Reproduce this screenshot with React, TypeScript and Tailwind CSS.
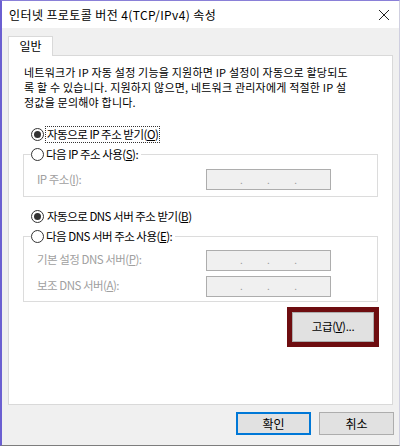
import React from "react";

function Radio({ checked }: { checked?: boolean }) {
  return (
    <span className="relative inline-flex w-[13px] h-[13px] rounded-full border border-[#333] bg-white items-center justify-center shrink-0">
      {checked && <span className="w-[7px] h-[7px] rounded-full bg-[#333]" />}
    </span>
  );
}

function IpBox() {
  return (
    <div className="w-[125px] h-[21px] border border-[#adadad] bg-[#f0f0f0] flex items-center justify-between px-[33px] text-[#9a9a9a] text-[10px] leading-none">
      <span>.</span>
      <span>.</span>
      <span>.</span>
    </div>
  );
}

export default function App() {
  return (
    <div
      className="w-[400px] h-[446px] bg-[#f0f0f0] border-l-2 border-t border-r border-b border-l-[#6b5fd1] border-t-[#8a80d8] border-r-[#cfcfe0] border-b-[#7d7d7d] flex flex-col text-[12px] text-black"
      style={{ fontFamily: '"Noto Sans CJK KR", "Noto Sans", sans-serif' }}
    >
      {/* title bar */}
      <div className="h-[27px] bg-white flex items-center justify-between pl-[7px] pr-[7px] shrink-0">
        <span className="text-[12px] tracking-[0.4px]">인터넷 프로토콜 버전 4(TCP/IPv4) 속성</span>
        <svg width="12" height="12" viewBox="0 0 12 12" className="mr-[2px]">
          <path d="M1 1 L11 11 M11 1 L1 11" stroke="#222" strokeWidth="1" />
        </svg>
      </div>

      {/* body */}
      <div className="flex-1 flex flex-col px-[6px] pt-[7px]">
        <div className="flex">
          <div className="w-[45px] h-[20px] bg-white border border-[#d9d9d9] border-b-0 flex items-center justify-center relative top-[1px] z-10">
            <span className="text-[12px] -mt-[1px]">일반</span>
          </div>
        </div>
        <div className="h-[350px] bg-white border border-[#d9d9d9] flex flex-col px-[14px] pt-[9px]">
          <div className="text-[11px] leading-[15px] tracking-[0.2px] pl-[1px] flex flex-col">
            <span>네트워크가 IP 자동 설정 기능을 지원하면 IP 설정이 자동으로 할당되도</span>
            <span>록 할 수 있습니다. 지원하지 않으면, 네트워크 관리자에게 적절한 IP 설</span>
            <span>정값을 문의해야 합니다.</span>
          </div>

          {/* IP section */}
          <div className="mt-[15px] pl-[8px] flex items-center gap-[1px] h-[18px] text-[11.5px]">
            <Radio checked />
            <span className="border border-dotted border-[#333] px-[1px] leading-[15px] tracking-[-0.5px]">
              자동으로 IP 주소 받기(<span className="underline">O</span>)
            </span>
          </div>
          <div className="relative mt-[3px] text-[11.5px]">
            <div className="absolute left-[8px] top-0 flex items-center gap-[2px] bg-white pr-[3px] h-[17px] z-10">
              <Radio />
              <span className="tracking-[-0.5px] leading-[15px]">
                다음 IP 주소 사용(<span className="underline">S</span>):
              </span>
            </div>
            <div className="mt-[8px] border border-[#dcdcdc] h-[43px] flex items-center justify-between pl-[13px] pr-[46px] pt-[8px]">
              <span className="text-[#a0a0a0] tracking-[-0.5px]">
                IP 주소(<span className="underline">I</span>):
              </span>
              <IpBox />
            </div>
          </div>

          {/* DNS section */}
          <div className="mt-[10px] pl-[8px] flex items-center gap-[2px] h-[18px] text-[11.5px]">
            <Radio checked />
            <span className="tracking-[-0.5px] leading-[15px] px-[1px]">
              자동으로 DNS 서버 주소 받기(<span className="underline">B</span>)
            </span>
          </div>
          <div className="relative mt-[3px] text-[11.5px]">
            <div className="absolute left-[8px] top-0 flex items-center gap-[2px] bg-white pr-[3px] h-[17px] z-10">
              <Radio />
              <span className="tracking-[-0.5px] leading-[15px]">
                다음 DNS 서버 주소 사용(<span className="underline">E</span>):
              </span>
            </div>
            <div className="mt-[8px] border border-[#dcdcdc] h-[66px] flex flex-col justify-center gap-[5px] pl-[13px] pr-[46px] pt-[8px]">
              <div className="flex items-center justify-between">
                <span className="text-[#a0a0a0] tracking-[-0.5px]">
                  기본 설정 DNS 서버(<span className="underline">P</span>):
                </span>
                <IpBox />
              </div>
              <div className="flex items-center justify-between">
                <span className="text-[#a0a0a0] tracking-[-0.5px]">
                  보조 DNS 서버(<span className="underline">A</span>):
                </span>
                <IpBox />
              </div>
            </div>
          </div>

          {/* advanced */}
          <div className="flex justify-end mt-[5px] -mr-[1px]">
            <div className="border-[5px] border-[#6e0d10]">
              <div className="w-[82px] h-[30px] bg-[#e1e1e1] border border-[#adadad] flex items-center justify-center text-[11.5px] tracking-[-0.3px]">
                고급(<span className="underline">V</span>)...
              </div>
            </div>
          </div>
        </div>
      </div>

      {/* footer */}
      <div className="h-[40px] flex items-start justify-end gap-[8px] pr-[5px] pt-[7px] shrink-0">
        <div className="w-[75px] h-[23px] bg-[#e1e1e1] border-2 border-[#0078d7] flex items-center justify-center">
          확인
        </div>
        <div className="w-[75px] h-[23px] bg-[#e1e1e1] border border-[#adadad] flex items-center justify-center">
          취소
        </div>
      </div>
    </div>
  );
}
